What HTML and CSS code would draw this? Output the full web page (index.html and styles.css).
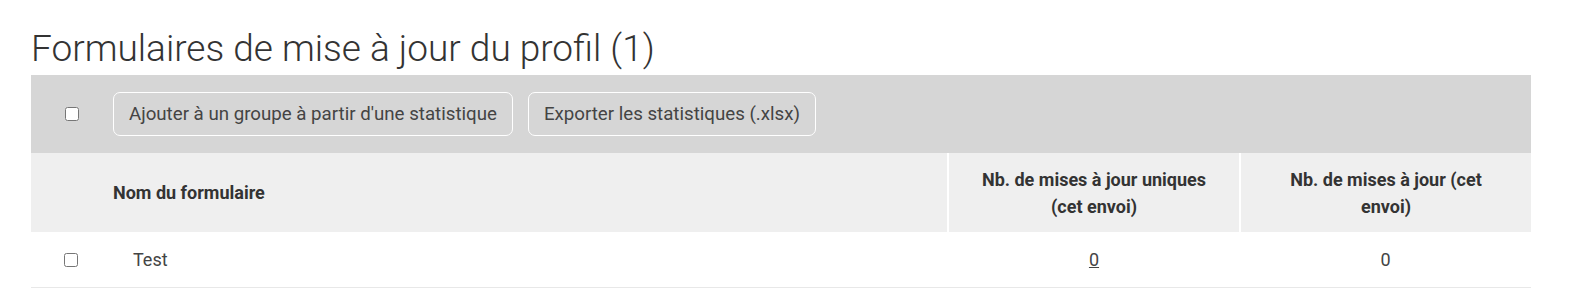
FILE: index.html
```html
<!DOCTYPE html>
<html lang="fr">
<head>
<meta charset="utf-8">
<link rel="stylesheet" href="styles.css">
</head>
<body>
<div class="page">
  <h1 class="title">Formulaires de mise à jour du profil (1)</h1>
  <div class="toolbar">
    <div class="cbcell"><input type="checkbox" class="cb"></div>
    <button class="btn">Ajouter à un groupe à partir d'une statistique</button>
    <button class="btn">Exporter les statistiques (.xlsx)</button>
  </div>
  <table class="grid">
    <colgroup>
      <col class="c-cb"><col class="c-name"><col class="c-num3"><col class="c-num4">
    </colgroup>
    <thead>
      <tr>
        <th></th>
        <th class="th-name">Nom du formulaire</th>
        <th class="th-num">Nb. de mises à jour uniques<br>(cet envoi)</th>
        <th class="th-num">Nb. de mises à jour (cet envoi)</th>
      </tr>
    </thead>
    <tbody>
      <tr>
        <td class="td-cb"><input type="checkbox" class="cb"></td>
        <td class="td-name">Test</td>
        <td class="td-num"><a href="#" class="lnk">0</a></td>
        <td class="td-num">0</td>
      </tr>
    </tbody>
  </table>
</div>
</body>
</html>
```
FILE: styles.css
```css
* { box-sizing: border-box; }
body { margin: 0; font-family: Roboto, "Liberation Sans", sans-serif; color: #444; background: #fff; }
.page { padding: 22px 0 0 31px; width: 1531px; }
.title { margin: 0; font-weight: 300; font-size: 37px; line-height: 53px; color: #333; }
.toolbar { display: flex; align-items: center; background: #d6d6d6; height: 78px; width: 1500px; }
.cbcell { width: 82px; display: flex; justify-content: center; }
.cb { width: 14px; height: 14px; margin: 0; }
.btn { font-family: inherit; font-size: 18.7px; color: #444; background: #d6d6d6; border: 1px solid #fff; border-radius: 7px; height: 44px; padding: 0 15px; margin-right: 15px; }
.grid { width: 1500px; border-collapse: collapse; table-layout: fixed; }
.c-cb { width: 82px; }
.c-name { width: 835px; }
.c-num3 { width: 292px; }
.c-num4 { width: 291px; }
thead tr { background: #efefef; height: 79px; }
th { font-size: 18px; font-weight: 700; color: #333; line-height: 27px; padding: 0; }
.th-name { text-align: left; }
.th-num { text-align: center; border-left: 2px solid #fff; padding: 0 30px; }
tbody tr { height: 55px; border-bottom: 1px solid #e8e8e8; }
td { font-size: 18px; color: #444; padding: 0; }
.td-cb { text-align: center; }
.td-cb .cb { position: relative; left: -1px; top: 1px; }
.td-name { padding-left: 20px; }
.td-num { text-align: center; }
.lnk { color: #444; }
```
